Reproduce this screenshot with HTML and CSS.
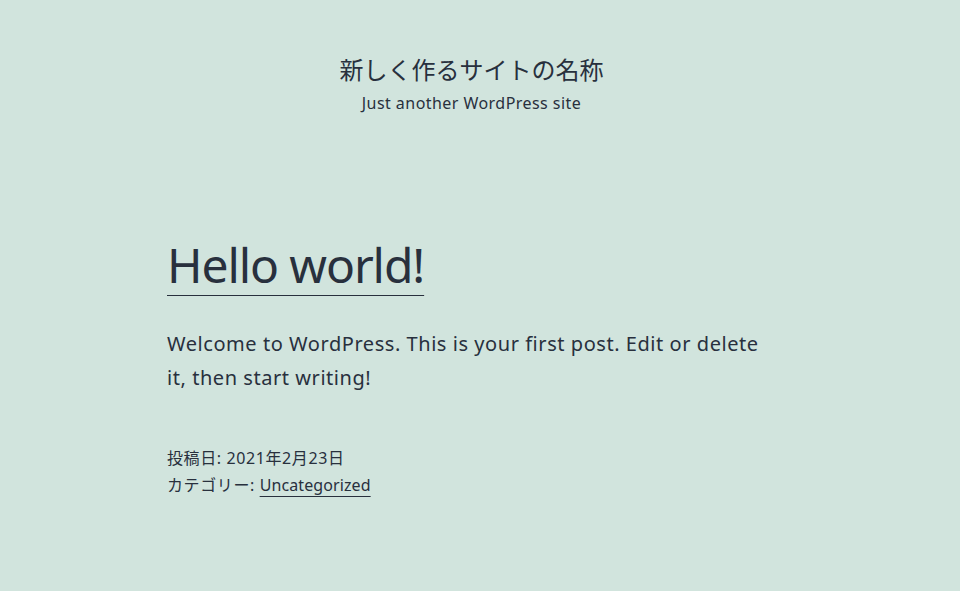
FILE: index.html
```html
<!DOCTYPE html>
<html lang="ja">
<head>
    <meta charset="UTF-8">
    <meta name="viewport" content="width=device-width, initial-scale=1.0">
    <title>新しく作るサイトの名称</title>
    <link rel="stylesheet" href="styles.css">
</head>
<body>
    <header class="site-header">
        <p class="site-title">新しく作るサイトの名称</p>
        <p class="site-description">Just another WordPress site</p>
    </header>
    <main class="site-main">
        <article class="post">
            <h1 class="entry-title"><a href="#">Hello world!</a></h1>
            <div class="entry-content">
                <p>Welcome to WordPress. This is your first post. Edit or delete it, then start writing!</p>
            </div>
            <footer class="entry-footer">
                <div class="posted-on">投稿日: 2021年2月23日</div>
                <div class="cat-links">カテゴリー: <a href="#">Uncategorized</a></div>
            </footer>
        </article>
    </main>
</body>
</html>
```

FILE: styles.css
```css
body {
    margin: 0;
    background-color: #d1e4dd;
    color: #28303d;
    font-family: "Noto Sans", "Noto Sans CJK JP", sans-serif;
}

a {
    color: #28303d;
    text-decoration: underline;
    text-underline-offset: 3px;
    text-decoration-thickness: 1px;
}

/* centred as if a scrollbar took the right edge */
.site-header {
    padding: 52px 17px 0 0;
    text-align: center;
}

.site-title {
    margin: 0;
    font-size: 24px;
    line-height: 36px;
}

.site-description {
    margin: 0;
    font-size: 16px;
    line-height: 30px;
    letter-spacing: 0.45px;
}

.site-main {
    padding: 117px 0 0 167px;
}

.post {
    width: 600px;
}

.entry-title {
    margin: 0;
    font-size: 48px;
    font-weight: normal;
    line-height: 60px;
    letter-spacing: -1.1px;
}

.entry-title a {
    text-underline-offset: 12px;
}

.entry-content p {
    margin: 32px 0 0;
    font-size: 20px;
    line-height: 34px;
    letter-spacing: 0.55px;
}

.entry-footer {
    margin-top: 50px;
    font-size: 16px;
    line-height: 27px;
    letter-spacing: 0.6px;
}

.cat-links a {
    letter-spacing: 0.1px;
    text-underline-offset: 5px;
}
```
